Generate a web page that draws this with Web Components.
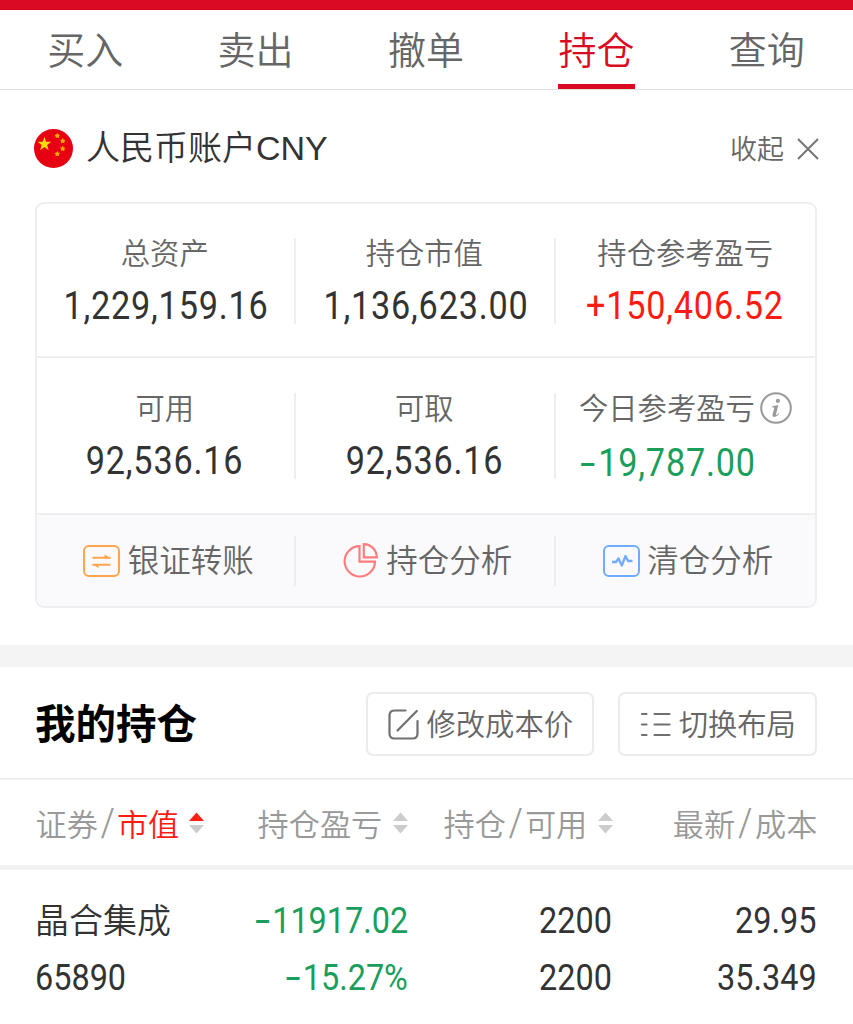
<!DOCTYPE html>
<html lang="zh-CN">
<head>
<meta charset="utf-8">
<title>持仓</title>
<style>
html,body{margin:0;padding:0;background:#fff}
body{width:853px;height:1024px;overflow:hidden;font-family:"Noto Sans CJK SC",sans-serif;font-weight:350;color:#333}
</style>
</head>
<body>
<trade-app></trade-app>
<script>
const define = (name, html) => {
  const t = document.createElement('template');
  t.innerHTML = html;
  customElements.define(name, class extends HTMLElement {
    constructor() {
      super();
      this.attachShadow({ mode: 'open' }).appendChild(t.content.cloneNode(true));
    }
  });
};

/* Tabs */
define('tab-item', `<style>
:host{flex:1;display:flex;flex-direction:column;align-items:center;justify-content:space-between;color:#666;font-size:38px;line-height:56px;height:79px}
span{margin-top:10px}
i{display:block;width:77px;height:5px;background:transparent}
:host([active]){color:#da0a22}
:host([active]) i{background:#da0a22}
</style><span><slot></slot></span><i></i>`);
define('tab-bar', `<style>
:host{display:flex;border-top:10px solid #da0a22;border-bottom:1px solid #e0e0e0;height:79px;padding-right:1px}
</style><slot></slot>`);

/* Numbers: condensed figures */
define('num-text', `<style>
:host{display:inline-block;font-family:Roboto,sans-serif;font-weight:400;white-space:nowrap}
span{display:inline-block;transform:scaleX(var(--k,.9));transform-origin:var(--o,center);letter-spacing:var(--ls,0)}
::slotted(b){font-family:Inter,sans-serif;font-weight:400;line-height:1px;display:inline-block;transform:scaleX(1.25);margin:0 2.5px 0 1px}
</style><span><slot></slot></span>`);

/* Account heading */
define('account-head', `<style>
:host{display:flex;align-items:center;height:112px;padding:0 34px;box-sizing:border-box}
svg{display:block;flex:none}
.n{font:350 34px/50px "Liberation Sans","Noto Sans CJK SC",sans-serif;margin-left:13px;flex:1;color:#333;position:relative;top:2px}
.c{font-size:27px;line-height:40px;color:#666;margin:4px 13px 0 0}
</style>
<svg width="39" height="39" viewBox="0 0 39 39" style="margin-top:4px"><circle cx="19.5" cy="19.5" r="19.5" fill="#e60012"/>
<path fill="#ffde00" d="M10.4 7.7 12 12.7 17.3 12.8 13.1 16 14.7 21.2 10.4 18.1 6.1 21.2 7.7 16 3.5 12.8 8.8 12.7Z"/>
<g fill="#fda800" transform="translate(23.3 6.7)"><path id="s" d="M0-2.8 1.1-1.1 2.8-.8 1.6.6 1.8 2.4 0 1.9-1.8 2.4-1.6.6-2.8-.8-1.1-1.1Z"/><use href="#s" x="5.4" y="5.2"/><use href="#s" x="5.4" y="12.9"/><use href="#s" y="18.1"/></g></svg>
<span class="n">人民币账户CNY</span><span class="c">收起</span>
<svg width="22" height="22" viewBox="0 0 22 22" fill="none" stroke="#757575" stroke-width="2" style="margin-top:5px"><path d="M1 1 21 21M21 1 1 21"/></svg>`);

/* Asset card */
define('asset-cell', `<style>
:host{display:flex;flex-direction:column;align-items:center;position:relative;text-align:center;padding-top:25px;height:152px;box-sizing:border-box}
:host(:not([last]))::after{content:"";position:absolute;right:0;top:34px;width:2px;height:86px;background:#eee}
.l{font-size:29.3px;line-height:44px;color:#666;display:flex;align-items:center}
:host(:not([last])) .l{padding-right:3px}
num-text{font-size:38px;line-height:48px;margin-top:9px;--ls:.9px;color:var(--c,#333)}
:host([low]){padding-top:26px;height:155px}
:host([low]:not([last]))::after{top:35px}
:host([low]:not([last])) num-text{margin-right:2.5px}
:host([left]){align-items:flex-start;padding-left:23.5px}
:host([left]) num-text{--o:left;margin-top:11px}
::slotted(svg){margin:4px 0 0 5.5px}
</style><div class="l"><slot name="label"></slot><slot name="icon"></slot></div><slot name="value"></slot><num-text><slot></slot></num-text>`);
define('action-cell', `<style>
:host{display:flex;align-items:center;justify-content:center;position:relative;font-size:31.5px;line-height:46px;color:#666;gap:8px;height:91px;padding-left:4px}
:host(:not([last]))::after{content:"";position:absolute;right:0;top:21px;width:2px;height:50px;background:#ececf0}
:host([last]){padding-left:6px;gap:7px}
span{position:relative;top:-2.5px}
</style><slot name="icon"></slot><span><slot></slot></span>`);
define('asset-card', `<style>
:host{display:block;margin:0 36px 0 34.5px;border:2px solid #eee;border-radius:9px;overflow:hidden}
.r{display:grid;grid-template-columns:259.5px 259.5px 1fr}
.r+.r{border-top:2px solid #eee}
.f{background:#fafafc}
b{font-weight:inherit}
.m{font-family:Inter,sans-serif;font-weight:400;line-height:1px;display:inline-block;transform:scaleX(1.2);margin:0 2.5px 0 .5px}
</style>
<div class="r">
<asset-cell><b slot="label">总资产</b>1,229,159.16</asset-cell>
<asset-cell><b slot="label">持仓市值</b>1,136,623.00</asset-cell>
<asset-cell last style="--c:#ff1a12"><b slot="label">持仓参考盈亏</b>+150,406.52</asset-cell></div>
<div class="r">
<asset-cell low><b slot="label">可用</b>92,536.16</asset-cell>
<asset-cell low><b slot="label">可取</b>92,536.16</asset-cell>
<asset-cell low last left style="--c:#1a9e5c"><b slot="label">今日参考盈亏</b><svg slot="icon" width="32" height="32" viewBox="0 0 32 32"><circle cx="16" cy="16" r="14.8" fill="none" stroke="#999" stroke-width="2"/><circle cx="17.9" cy="8.9" r="2.1" fill="#999"/><path fill="#999" d="M12.3 14.3 18.3 13 16 22.3Q15.8 23.5 16.7 22.9L18.6 21.3 19.2 22Q16.5 25 14.2 25 12 24.8 12.6 22.5L14.4 15.6 12.3 15.4Z"/></svg><span class="m">-</span>19,787.00</asset-cell></div>
<div class="r f">
<action-cell><svg slot="icon" width="37" height="32" viewBox="0 0 37 32" fill="none" stroke="#ffa64d" stroke-width="2"><rect x="1" y="1" width="35" height="30" rx="5"/><path d="M9.5 12.7H27.5M27.5 19.7H9.5"/><path fill="#ffa64d" stroke="none" d="M21.5 9.5 28 13.5H21.5ZM15.5 23 9 19H15.5Z"/></svg>银证转账</action-cell>
<action-cell><svg slot="icon" width="35" height="35" viewBox="0 0 35 35" fill="none" stroke="#ff7d7d" stroke-width="2.2"><path d="M16.5 3.1A15.2 15.2 0 1 0 32 18.7H16.5ZM20.8 1.2V14.4H33.8A13.2 13.2 0 0 0 20.8 1.2Z"/></svg>持仓分析</action-cell>
<action-cell last><svg slot="icon" width="37" height="32" viewBox="0 0 37 32" fill="none" stroke="#6fabff" stroke-width="2"><rect x="1" y="1" width="35" height="30" rx="5"/><path d="M9 17H13L15.5 13.5 18.8 20.5 22.5 11 25 16H29.5" stroke-width="2.3" stroke-linejoin="round"/></svg>清仓分析</action-cell></div>`);

/* Holdings */
define('tool-button', `<style>
:host{display:flex;align-items:center;justify-content:center;box-sizing:border-box;width:var(--w);height:64px;border:2px solid #ebebeb;border-radius:7px;font-size:29.3px;line-height:44px;color:#666;gap:8px;padding-left:1px}
span{position:relative;top:-2px}
</style><slot name="icon"></slot><span><slot></slot></span>`);
define('holdings-head', `<style>
:host{display:flex;align-items:center;height:108px;padding:3px 36px 0 35px;border-top:22px solid #f4f4f4;border-bottom:2px solid #eee;margin-top:37px}
h2{font-size:40.5px;line-height:60px;font-weight:600;color:#000;margin:-4px auto 0 0}
tool-button+tool-button{margin-left:23.5px}
</style><h2>我的持仓</h2>
<tool-button style="--w:228.5px"><svg slot="icon" width="31" height="31" viewBox="0 0 31 31" fill="none" stroke="#707070" stroke-width="2.2" stroke-linecap="round"><path d="M17.5 1.5H6.5Q1.5 1.5 1.5 6.5V24.5Q1.5 29.5 6.5 29.5H24.5Q29.5 29.5 29.5 24.5V12M9.5 21.5 28.8 2"/></svg>修改成本价</tool-button>
<tool-button style="--w:199.5px"><svg slot="icon" width="31" height="31" viewBox="0 0 31 31" fill="none" stroke="#707070" stroke-width="2.2" stroke-linecap="round"><path d="M2 5H6.5M14.5 5H29.5M2 15.5H6.5M14.5 15.5H29.5M2 26H6.5M14.5 26H29.5"/></svg>切换布局</tool-button>`);
define('sort-mark', `<style>
:host{display:block;margin-left:11px;height:22px}
:host([up]){margin-left:10px}
svg{display:block}
path:first-child{fill:#ccc}
:host([up]) path:first-child{fill:#ff2015}
</style><svg width="15" height="22" viewBox="0 0 15 22"><path d="M0 9 7.5 .5 15 9Z"/><path fill="#ccc" d="M0 13H15L7.5 21.5Z"/></svg>`);
define('table-head', `<style>
:host{display:grid;grid-template-columns:222px 186px 198px 1fr;align-items:center;height:85px;padding:0 35.5px;border-bottom:5px solid #f2f2f2;font-size:31.2px;line-height:46px;color:#999}
div{display:flex;align-items:center}
.r{justify-content:flex-end}
i{font-style:normal;display:inline-block;width:19px;text-align:center;transform:translateY(-3px) scale(1.1,1)}
.r i{width:20px}
em{font-style:normal;color:#ff1a12}
</style>
<div><span>证券<i>/</i><em>市值</em></span><sort-mark up></sort-mark></div>
<div><span>持仓盈亏</span><sort-mark></sort-mark></div>
<div><span>持仓<i>/</i>可用</span><sort-mark></sort-mark></div>
<div class="r"><span>最新<i>/</i>成本</span></div>`);
define('holding-row', `<style>
:host{display:grid;grid-template-columns:180px 193px 204px 204.5px;grid-auto-rows:57px;align-items:center;padding:22.5px 36px 0 35px;font-size:36px;line-height:50px;color:#333}
.n{font-size:34px;margin-top:-4px}
num-text{justify-self:end;--o:right}
.l{justify-self:start;--o:left}
.g{color:#1a9e5c}
</style>
<span class="n"><slot></slot></span>
<num-text class="g"><b>-</b>11917.02</num-text><num-text>2200</num-text><num-text>29.95</num-text>
<num-text class="l">65890</num-text><num-text class="g"><b>-</b>15.27%</num-text><num-text>2200</num-text><num-text>35.349</num-text>`);

define('trade-app', `<style>:host{display:block;width:853px;height:1024px;background:#fff;overflow:hidden}</style>
<tab-bar><tab-item>买入</tab-item><tab-item>卖出</tab-item><tab-item>撤单</tab-item><tab-item active>持仓</tab-item><tab-item>查询</tab-item></tab-bar>
<account-head></account-head>
<asset-card></asset-card>
<holdings-head></holdings-head>
<table-head></table-head>
<holding-row>晶合集成</holding-row>`);
</script>
</body>
</html>
